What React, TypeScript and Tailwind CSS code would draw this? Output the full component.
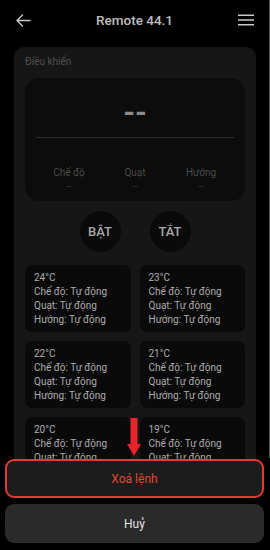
import React from "react";

const cards = [24, 23, 22, 21, 20, 19];

export default function App() {
  return (
    <div
      className="relative w-[270px] h-[550px] overflow-hidden bg-black"
      style={{ fontFamily: "Roboto, 'Noto Sans', sans-serif" }}
    >
      {/* header */}
      <div className="h-[40px] flex items-center justify-between pl-[16px] pr-[16px]">
        <svg width="15" height="13" viewBox="0 0 15 13" fill="none" stroke="#c8c8c8" strokeWidth="1.4" strokeLinecap="round" strokeLinejoin="round">
          <path d="M14 6.5H1.5M6.5 1L1 6.5L6.5 12" />
        </svg>
        <div className="text-[13.5px] font-medium text-[#bdbdbd]">Remote 44.1</div>
        <svg width="16" height="12" viewBox="0 0 16 12" fill="none" stroke="#c8c8c8" strokeWidth="1.5">
          <path d="M0 1.2H16M0 6H16M0 10.8H16" />
        </svg>
      </div>

      {/* panel */}
      <div className="mt-[7px] mx-[14px] rounded-[10px] bg-[#161616] px-[11px] pt-[9px] pb-[60px]">
        <div className="text-[10px] leading-[12px] text-[#4f4f4f]">Điều khiển</div>
        <div className="mt-[10px] rounded-[14px] bg-[#0c0c0c] pb-[8px]">
          <div className="h-[59px] flex items-center justify-center pt-[8px]">
            <span className="text-[30px] leading-[30px] font-bold text-[#8a8a8a]">--</span>
          </div>
          <div className="mx-[11px] h-px bg-[#2c2c2c]" />
          <div className="mx-[11px] mt-[28px] grid grid-cols-3 text-center">
            {["Chế độ", "Quạt", "Hướng"].map((l) => (
              <div key={l} className="flex flex-col items-center">
                <div className="text-[10px] leading-[13px] text-[#4b4b4b]">{l}</div>
                <div className="text-[9px] leading-[14px] text-[#3c3c3c]">--</div>
              </div>
            ))}
          </div>
        </div>

        <div className="mt-[10px] flex justify-center gap-[29px]">
          <div className="w-[41px] h-[41px] rounded-full bg-[#0a0a0a] flex items-center justify-center text-[13px] font-medium text-[#a8a8a8]">
            BẬT
          </div>
          <div className="w-[41px] h-[41px] rounded-full bg-[#0a0a0a] flex items-center justify-center text-[13px] font-medium text-[#a8a8a8]">
            TẮT
          </div>
        </div>

        <div className="mt-[13px] grid grid-cols-2 gap-x-[9px] gap-y-[9px]">
          {cards.map((t) => (
            <div key={t} className="rounded-[7px] bg-[#0a0a0a] pl-[9px] pt-[6px] pb-[5px] text-[10px] leading-[14px] text-[#acacac]">
              <div>{t}°C</div>
              <div>Chế độ: Tự động</div>
              <div>Quạt: Tự động</div>
              <div>Hướng: Tự động</div>
            </div>
          ))}
        </div>
      </div>

      {/* right edge line */}
      <div className="absolute right-0 top-0 w-px h-[458px] bg-[#5c5c5c]" />

      {/* red arrow */}
      <svg className="absolute left-[127px] top-[418px]" width="14" height="38" viewBox="0 0 14 38">
        <path d="M3.5 0H10.5V26H14L7 38L0 26H3.5Z" fill="#e8232a" />
      </svg>

      {/* bottom sheet */}
      <div className="absolute left-0 right-0 top-[459px] bottom-0 bg-black pl-[5px] pr-[6px] flex flex-col gap-[6px]">
        <button className="h-[39px] w-full rounded-[9px] border-2 border-[#e53935] bg-[#1c1c1c] text-[12px] text-[#e0492f]">
          Xoá lệnh
        </button>
        <button className="h-[39px] w-full rounded-[9px] bg-[#2a2a2a] text-[12px] text-[#e2e2e2]">
          Huỷ
        </button>
      </div>
    </div>
  );
}
